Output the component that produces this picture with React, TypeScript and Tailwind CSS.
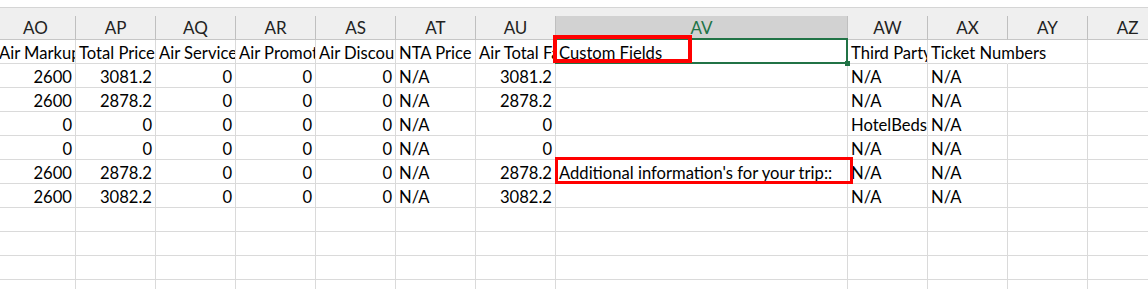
import clsx from "clsx";

const columns = [
  { id: "AO", w: "w-[80px]" },
  { id: "AP", w: "w-[80px]" },
  { id: "AQ", w: "w-[80px]" },
  { id: "AR", w: "w-[80px]" },
  { id: "AS", w: "w-[80px]" },
  { id: "AT", w: "w-[80px]" },
  { id: "AU", w: "w-[80px]" },
  { id: "AV", w: "w-[292px]" },
  { id: "AW", w: "w-[80px]" },
  { id: "AX", w: "w-[80px]" },
  { id: "AY", w: "w-[80px]" },
  { id: "AZ", w: "w-[80px]" },
];

const rows: string[][] = [
  ["Air Markup", "Total Price", "Air Service", "Air Promotion", "Air Discount", "NTA Price", "Air Total Fare", "Custom Fields", "Third Party", "Ticket Numbers", "", ""],
  ["2600", "3081.2", "0", "0", "0", "N/A", "3081.2", "", "N/A", "N/A", "", ""],
  ["2600", "2878.2", "0", "0", "0", "N/A", "2878.2", "", "N/A", "N/A", "", ""],
  ["0", "0", "0", "0", "0", "N/A", "0", "", "HotelBeds", "N/A", "", ""],
  ["0", "0", "0", "0", "0", "N/A", "0", "", "N/A", "N/A", "", ""],
  ["2600", "2878.2", "0", "0", "0", "N/A", "2878.2", "Additional information's for your trip::", "N/A", "N/A", "", ""],
  ["2600", "3082.2", "0", "0", "0", "N/A", "3082.2", "", "N/A", "N/A", "", ""],
  ["", "", "", "", "", "", "", "", "", "", "", ""],
  ["", "", "", "", "", "", "", "", "", "", "", ""],
  ["", "", "", "", "", "", "", "", "", "", "", ""],
  ["", "", "", "", "", "", "", "", "", "", "", ""],
];

const isNum = (v: string) => /^\d+(\.\d+)?$/.test(v);

export default function App() {
  return (
    <div className="relative w-[1148px] h-[289px] overflow-hidden bg-white text-black font-[Lato,'Liberation_Sans',sans-serif] text-[16.6px]">
      <div className="h-[7px]" />

      {/* column letters */}
      <div className="border-t border-[#d5d5d5] bg-[#efefef] pt-[8px]">
        <div className="flex -ml-[4px]">
          {columns.map((c) => (
            <div
              key={c.id}
              className={clsx(
                c.w,
                "h-[24px] shrink-0 flex items-center justify-center border-r border-r-[#bfbfbf] text-[17px] leading-none",
                c.id === "AV"
                  ? "bg-[#d2d2d2] text-[#217346] border-b-2 border-b-[#217346]"
                  : "text-[#222] border-b border-b-[#c6c6c6]"
              )}
            >
              {c.id}
            </div>
          ))}
        </div>
      </div>

      {/* cells */}
      {rows.map((row, r) => (
        <div key={r} className="flex -ml-[4px]">
          {row.map((v, i) => {
            const spill = r === 0 && columns[i].id === "AX";
            return (
              <div
                key={i}
                className={clsx(
                  columns[i].w,
                  "h-[24px] shrink-0 flex items-center pt-[4px] whitespace-nowrap border-b border-r border-[#dadada] leading-none",
                  isNum(v) ? "justify-end pr-[3px]" : "pl-[3px]",
                  spill ? "overflow-visible border-r-transparent" : "overflow-hidden"
                )}
              >
                <span>{v}</span>
              </div>
            );
          })}
        </div>
      ))}

      {/* active cell AV1 */}
      <div className="absolute left-[555px] top-[38px] w-[293px] h-[26px] border-2 border-[#217346]" />
      <div className="absolute left-[845px] top-[61px] w-[5px] h-[5px] bg-[#217346]" />

      {/* annotation boxes */}
      <div className="absolute left-[553px] top-[35px] w-[139px] h-[28px] border-[4px] border-[#ff0000]" />
      <div className="absolute left-[555px] top-[157px] w-[298px] h-[27px] border-[3px] border-[#ff0000]" />
    </div>
  );
}
